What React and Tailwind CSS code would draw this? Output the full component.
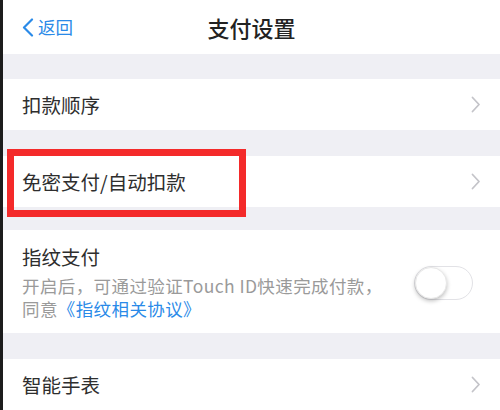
import React from 'react';

const font = { fontFamily: '"Noto Sans CJK SC", "Noto Sans", sans-serif' };

function Chevron() {
  return (
    <svg width="10" height="17" viewBox="0 0 10 17" className="shrink-0">
      <path d="M1.5 1.5 L8 8.5 L1.5 15.5" fill="none" stroke="#c4c4c9" strokeWidth="1.8" strokeLinecap="round" strokeLinejoin="round" />
    </svg>
  );
}

function Row({ label, children }) {
  return (
    <div className="relative h-[51px] bg-white flex items-center justify-between pl-[19px] pr-[19px]">
      <span className="text-[19.5px] text-[#2e2e2e]">{label}</span>
      <Chevron />
      {children}
    </div>
  );
}

export default function App() {
  return (
    <div style={font} className="w-[500px] h-[410px] overflow-hidden bg-[#efeff4] border-l-[3px] border-[#1c1c1c] flex flex-col">
      {/* nav bar */}
      <div className="relative h-[54px] bg-white flex items-center justify-center shrink-0">
        <div className="absolute left-[19px] top-0 h-full flex items-center gap-[4px] text-[#2a8ae8]">
          <svg width="12" height="19" viewBox="0 0 12 19">
            <path d="M10 1.5 L2 9.5 L10 17.5" fill="none" stroke="#2a8ae8" strokeWidth="2.2" strokeLinecap="round" strokeLinejoin="round" />
          </svg>
          <span className="text-[17.5px]">返回</span>
        </div>
        <span className="text-[22px] text-[#222] font-medium">支付设置</span>
      </div>

      <div className="h-[25px] shrink-0" />
      <Row label="扣款顺序" />

      <div className="h-[26px] shrink-0" />
      <Row label="免密支付/自动扣款">
        <div className="absolute left-[4px] top-[-7px] w-[239px] h-[68px] border-[7px] border-[#f42a2a]" />
      </Row>

      <div className="h-[23px] shrink-0" />
      {/* fingerprint */}
      <div className="h-[103px] bg-white flex items-center justify-between pl-[19px] pr-[27px] shrink-0">
        <div className="flex flex-col">
          <span className="text-[19.5px] text-[#2e2e2e] leading-[28px]">指纹支付</span>
          <span className="text-[17.5px] tracking-[0.4px] text-[#9a9a9a] leading-[23px] mt-[3px]">
            开启后，可通过验证Touch ID快速完成付款，
            <br />
            同意<span className="text-[#2a8ae8]">《指纹相关协议》</span>
          </span>
        </div>
        <div className="w-[59px] h-[34px] rounded-full border border-[#e2e2e6] bg-white relative mt-[2px] shrink-0">
          <div className="absolute left-[0px] top-[0px] w-[32px] h-[32px] rounded-full bg-white shadow-[0_2px_4px_rgba(0,0,0,0.25)] border border-[#e8e8e8]" />
        </div>
      </div>

      <div className="h-[26px] shrink-0" />
      <Row label="智能手表" />
    </div>
  );
}
